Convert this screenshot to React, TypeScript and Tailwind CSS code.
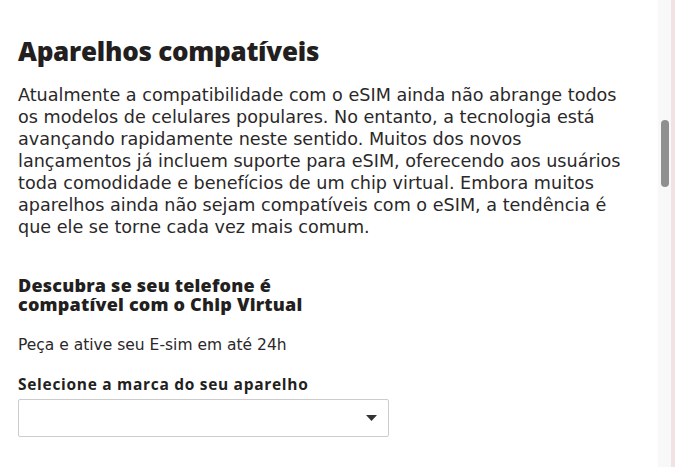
export default function App() {
    return <div className="flex h-[467px] w-[675px] bg-white overflow-hidden">
        <main className="flex-1 pl-[18px] pr-[18px] pt-[35px] text-[#231f20] font-['Open_Sans',sans-serif]">
            <h1 className="text-[26px] leading-[32px] font-extrabold tracking-[-0.25px]">Aparelhos compatíveis</h1>
            <p className="mt-[17px] font-['DejaVu_Sans',sans-serif] text-[17.6px] leading-[22px] text-[#2b2829] w-[622px]">
                Atualmente a compatibilidade com o eSIM ainda não abrange todos os modelos de celulares populares. No entanto, a tecnologia está avançando rapidamente neste sentido. Muitos dos novos lançamentos já incluem suporte para eSIM, oferecendo aos usuários toda comodidade e benefícios de um chip virtual. Embora muitos aparelhos ainda não sejam compatíveis com o eSIM, a tendência é que ele se torne cada vez mais comum.
            </p>

            <h2 className="mt-[38px] text-[18px] leading-[19px] font-extrabold tracking-[0.2px] w-[300px]">Descubra se seu telefone é compatível com o Chip Virtual</h2>
            <p className="mt-[21px] font-['DejaVu_Sans',sans-serif] text-[15.5px] leading-[20px] text-[#2b2829]">Peça e ative seu E-sim em até 24h</p>

            <label className="block mt-[19px] text-[15.5px] leading-[20px] font-bold tracking-[0.7px]">Selecione a marca do seu aparelho</label>
            <div className="mt-[5px] flex items-center justify-end w-[371px] h-[38px] border border-[#cccccc] rounded-[2px] pr-[11px]">
                <svg width="11" height="6" viewBox="0 0 11 6"><path d="M0 0h11L5.5 6z" fill="#333" /></svg>
            </div>
        </main>

        {/* scrollbar track */}
        <div className="w-[15px] bg-[#f8f8f8] flex justify-center pt-[120px]">
            <div className="w-[8px] h-[67px] rounded-full bg-[#8f8f8f]" />
        </div>
        <div className="w-[4px] bg-[#f1e3e3]" />
    </div>
}
